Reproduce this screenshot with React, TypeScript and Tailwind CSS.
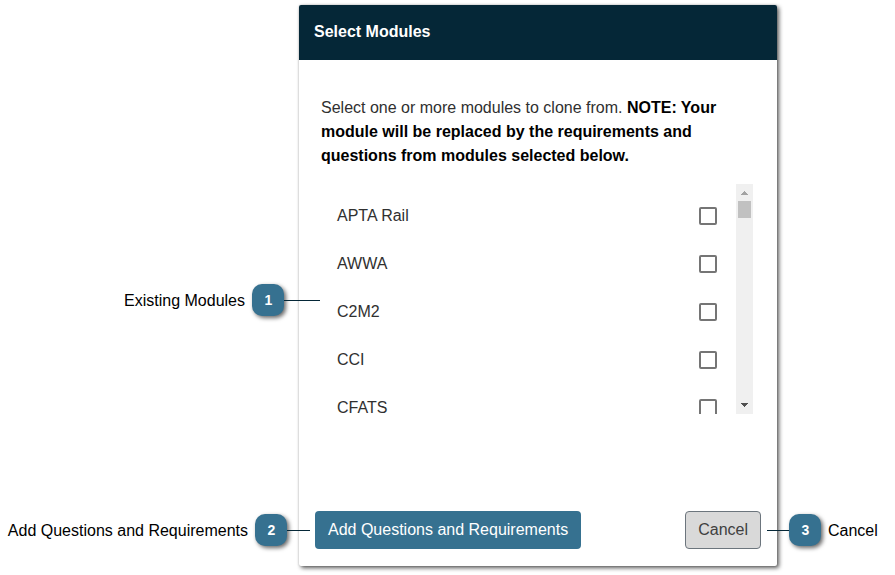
import type { ReactNode } from 'react';

const modules = [
  { id: 'apta-rail', name: 'APTA Rail' },
  { id: 'awwa', name: 'AWWA' },
  { id: 'c2m2', name: 'C2M2' },
  { id: 'cci', name: 'CCI' },
  { id: 'cfats', name: 'CFATS' },
];

function Badge({ children }: { children: ReactNode }) {
  return (
    <span className="flex size-8 shrink-0 items-center justify-center rounded-[10px] bg-[#367190] pl-px text-sm font-bold text-white shadow-[2px_2px_4px_rgba(0,0,0,0.6)]">
      {children}
    </span>
  );
}

function ModuleRow({ id, name }: { id: string; name: string }) {
  return (
    <li className="flex h-12 items-center justify-between pr-[19px] pl-4">
      <label htmlFor={id} className="text-[#303030]">
        {name}
      </label>
      <input
        id={id}
        type="checkbox"
        className="size-[18px] appearance-none rounded-xs border-2 border-[#757575] bg-white checked:bg-[#367190]"
      />
    </li>
  );
}

function Scrollbar() {
  return (
    <div className="flex w-[17px] shrink-0 flex-col items-center bg-[#f0f0f0]" aria-hidden="true">
      <div className="flex h-[17px] items-center">
        <svg width="7" height="4" viewBox="0 0 7 4" fill="#a3a3a3" shapeRendering="crispEdges">
          <path d="M3 0h1v1h1v1h1v1h1v1H0V3h1V2h1V1h1z" />
        </svg>
      </div>
      <div className="h-[17px] w-[13px] bg-[#c1c1c1]" />
      <div className="mt-auto flex h-[18px] items-center">
        <svg width="7" height="4" viewBox="0 0 7 4" fill="#505050" shapeRendering="crispEdges">
          <path d="M0 0h7v1H6v1H5v1H4v1H3V3H2V2H1V1H0z" />
        </svg>
      </div>
    </div>
  );
}

export default function App() {
  return (
    <main className="bg-white pt-[5px] pr-[118px] pb-2 pl-[299px] font-['Liberation_Sans',Arial,sans-serif] text-base text-black">
      <section
        role="dialog"
        aria-labelledby="dialog-title"
        className="rounded-xs bg-white shadow-[2px_2px_4px_rgba(0,0,0,0.65),0_0_2px_rgba(0,0,0,0.2)]"
      >
        <header className="rounded-t-xs bg-[#052737] px-[15px] pt-[15px] pb-4">
          <h1 id="dialog-title" className="font-bold text-white">
            Select Modules
          </h1>
        </header>

        <div className="pt-9 pr-6 pl-[22px]">
          <p className="text-[#303030]">
            Select one or more modules to clone from.{' '}
            <strong className="font-bold text-black">
              NOTE: Your module will be replaced by the requirements and questions from modules
              selected below.
            </strong>
          </p>

          <div className="relative mt-4 flex h-[230px]">
            <ul className="grow overflow-hidden pt-2">
              {modules.map((module) => (
                <ModuleRow key={module.id} id={module.id} name={module.name} />
              ))}
            </ul>
            <Scrollbar />
            <div className="absolute top-[100px] right-full mr-px flex items-center">
              <span className="mr-[7px] pt-0.5 whitespace-nowrap">Existing Modules</span>
              <Badge>1</Badge>
              <span className="h-px w-9 bg-[#052737]" />
            </div>
          </div>
        </div>

        <footer className="mt-[97px] flex justify-between px-4 pb-[17px]">
          <div className="relative">
            <button
              type="button"
              className="h-[38px] rounded-sm bg-[#367190] px-[13px] whitespace-nowrap text-white"
            >
              Add Questions and Requirements
            </button>
            <div className="absolute inset-y-0 right-full mr-[5px] flex items-center">
              <span className="mr-[7px] pt-0.5 whitespace-nowrap">
                Add Questions and Requirements
              </span>
              <Badge>2</Badge>
              <span className="h-px w-[23px] bg-[#052737]" />
            </div>
          </div>
          <div className="relative">
            <button
              type="button"
              className="h-[38px] rounded-sm border border-[#6c757d] bg-[#d9d9d9] px-3 text-[#404040]"
            >
              Cancel
            </button>
            <div className="absolute inset-y-0 left-full ml-[6px] flex items-center">
              <span className="h-px w-[22px] bg-[#052737]" />
              <Badge>3</Badge>
              <span className="ml-[7px] pt-0.5">Cancel</span>
            </div>
          </div>
        </footer>
      </section>
    </main>
  );
}
